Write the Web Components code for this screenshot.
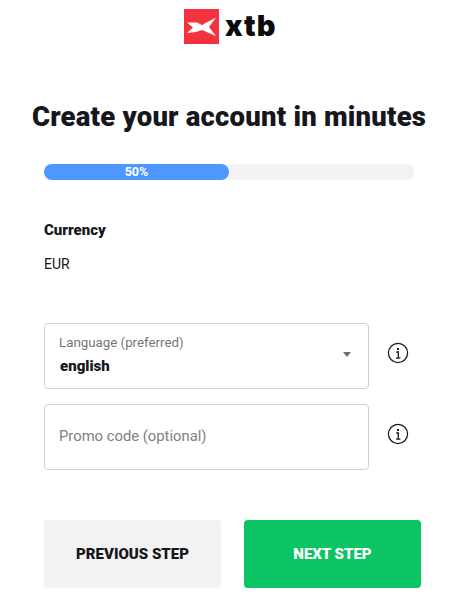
<!DOCTYPE html>
<html lang="en">
<head>
<meta charset="utf-8">
<title>Create your account</title>
<style>
  html, body { margin: 0; padding: 0; background: #fff; }
  body { font-family: Roboto, "Liberation Sans", sans-serif; color: #15171c; }
</style>
</head>
<body>
<signup-page>
  <xtb-logo></xtb-logo>
  <h-title>Create your account in minutes</h-title>
  <progress-pill value="50"></progress-pill>
  <info-block label="Currency">EUR</info-block>
  <div slot="fields">
    <field-row><select-field label="Language (preferred)">english</select-field></field-row>
    <field-row><text-field placeholder="Promo code (optional)"></text-field></field-row>
  </div>
  <div slot="actions">
    <step-button>PREVIOUS STEP</step-button>
    <step-button primary>NEXT STEP</step-button>
  </div>
</signup-page>
<script>
class SignupPage extends HTMLElement {
  connectedCallback() {
    this.attachShadow({ mode: 'open' });
    this.shadowRoot.innerHTML = `
      <style>
        :host { display: flex; flex-direction: column; width: 451px; height: 605px; box-sizing: border-box; padding: 9px 0 0 44px; overflow: hidden; }
        ::slotted(div[slot="fields"]) { display: flex; flex-direction: column; gap: 15px; margin-top: 49px; }
        ::slotted(div[slot="actions"]) { display: flex; gap: 23px; margin-top: 50px; }
      </style>
      <slot></slot>
      <slot name="fields"></slot>
      <slot name="actions"></slot>
    `;
  }
}

class XtbLogo extends HTMLElement {
  connectedCallback() {
    this.attachShadow({ mode: 'open' });
    this.shadowRoot.innerHTML = `
      <style>
        :host { display: flex; align-items: center; gap: 6px; height: 35px; margin-left: 140px; }
        svg { width: 35px; height: 35px; display: block; }
        span { font: 900 29px/35px Inter, "Liberation Sans", sans-serif; color: #0c0c0e; letter-spacing: 1px; margin-top: -3px; }
      </style>
      <svg viewBox="0 0 35 35">
        <rect width="35" height="35" fill="#f4333f"/>
        <path fill="#fff" d="M3 13.5 L13 13.5 L18 16 L32 8.5 L25 18 L32 27 L18 21 L12 23 L3 24 L9 18.5 Z"/>
      </svg>
      <span>xtb</span>
    `;
  }
}

class HTitle extends HTMLElement {
  connectedCallback() {
    this.attachShadow({ mode: 'open' });
    this.shadowRoot.innerHTML = `
      <style>
        :host { display: block; margin: 55px 0 0 -12px; font: 900 27.5px/36px Roboto, sans-serif; white-space: nowrap; color: #15171c; letter-spacing: 0.2px; }
      </style>
      <slot></slot>
    `;
  }
}

class ProgressPill extends HTMLElement {
  connectedCallback() {
    const value = this.getAttribute('value');
    this.attachShadow({ mode: 'open' });
    this.shadowRoot.innerHTML = `
      <style>
        :host { display: block; width: 370px; height: 16px; margin-top: 29px; background: #f2f2f2; border-radius: 8px; }
        div { width: ${value}%; height: 100%; background: #4d97ff; border-radius: 8px; color: #fff; font: 700 12.5px/16px Roboto, sans-serif; text-align: center; }
      </style>
      <div>${value}%</div>
    `;
  }
}

class InfoBlock extends HTMLElement {
  connectedCallback() {
    this.attachShadow({ mode: 'open' });
    this.shadowRoot.innerHTML = `
      <style>
        :host { display: block; margin-top: 40px; font: 400 14px/20px Roboto, sans-serif; }
        strong { display: block; font-weight: 900; font-size: 15px; margin-bottom: 14px; }
      </style>
      <strong>${this.getAttribute('label')}</strong>
      <slot></slot>
    `;
  }
}

class FieldRow extends HTMLElement {
  connectedCallback() {
    this.attachShadow({ mode: 'open' });
    this.shadowRoot.innerHTML = `
      <style>
        :host { display: flex; align-items: flex-start; gap: 18px; }
        svg { width: 22px; height: 22px; margin-top: 19px; flex: none; }
      </style>
      <slot></slot>
      <svg viewBox="0 0 22 22">
        <circle cx="11" cy="11" r="9.6" fill="none" stroke="#15171c" stroke-width="1.2"/>
        <path fill="#15171c" d="M10 6h2v2h-2z"/>
        <path fill="none" stroke="#15171c" stroke-width="1.3" d="M9.2 10h2.1v6M9 16.2h4.4"/>
      </svg>
    `;
  }
}

const fieldBox = `
  :host { display: flex; align-items: center; box-sizing: border-box; width: 325px; height: 66px; padding: 0 14px; border: 1px solid #cfcfcf; border-radius: 4px; background: #fff; }
`;

class SelectField extends HTMLElement {
  connectedCallback() {
    this.attachShadow({ mode: 'open' });
    this.shadowRoot.innerHTML = `
      <style>
        ${fieldBox}
        .text { flex: 1; margin-top: -2px; }
        label { display: block; font: 400 13.3px/18px Roboto, sans-serif; color: #767676; margin: -2px 0 5px; }
        b { display: block; font: 900 15px/18px Roboto, sans-serif; color: #15171c; margin-left: 1px; }
        i { width: 0; height: 0; border-left: 4.5px solid transparent; border-right: 4.5px solid transparent; border-top: 5px solid #6f6f6f; margin: -4px 3px 0 0; }
      </style>
      <div class="text">
        <label>${this.getAttribute('label')}</label>
        <b><slot></slot></b>
      </div>
      <i></i>
    `;
  }
}

class TextField extends HTMLElement {
  connectedCallback() {
    this.attachShadow({ mode: 'open' });
    this.shadowRoot.innerHTML = `
      <style>
        ${fieldBox}
        span { font: 400 14.8px/20px Roboto, sans-serif; color: #808080; margin-top: -2px; }
      </style>
      <span>${this.getAttribute('placeholder')}</span>
    `;
  }
}

class StepButton extends HTMLElement {
  connectedCallback() {
    this.attachShadow({ mode: 'open' });
    this.shadowRoot.innerHTML = `
      <style>
        :host { display: flex; align-items: center; justify-content: center; width: 177px; height: 68px; border-radius: 4px; background: #f2f2f2; color: #15171c; font: 900 15px/20px Roboto, sans-serif; }
        :host([primary]) { background: #0bc565; color: #fff; }
      </style>
      <slot></slot>
    `;
  }
}

customElements.define('signup-page', SignupPage);
customElements.define('xtb-logo', XtbLogo);
customElements.define('h-title', HTitle);
customElements.define('progress-pill', ProgressPill);
customElements.define('info-block', InfoBlock);
customElements.define('field-row', FieldRow);
customElements.define('select-field', SelectField);
customElements.define('text-field', TextField);
customElements.define('step-button', StepButton);
</script>
</body>
</html>
